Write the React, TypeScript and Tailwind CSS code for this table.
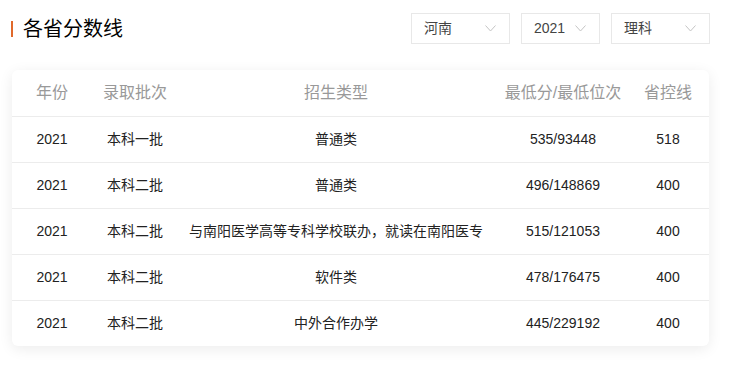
const font = "font-['Liberation_Sans','Noto_Sans_CJK_SC',sans-serif]";

const rows = [
  { year: '2021', batch: '本科一批', type: '普通类', score: '535/93448', line: '518' },
  { year: '2021', batch: '本科二批', type: '普通类', score: '496/148869', line: '400' },
  { year: '2021', batch: '本科二批', type: '与南阳医学高等专科学校联办，就读在南阳医专', score: '515/121053', line: '400' },
  { year: '2021', batch: '本科二批', type: '软件类', score: '478/176475', line: '400' },
  { year: '2021', batch: '本科二批', type: '中外合作办学', score: '445/229192', line: '400' },
];

const Chevron = () => (
  <svg width="11" height="7" viewBox="0 0 11 7" fill="none" className="shrink-0">
    <path d="M0.5 0.5 L5.5 6 L10.5 0.5" stroke="#c4c4c4" strokeWidth="1" />
  </svg>
);

const Select = ({ label, width }: { label: string; width: string }) => (
  <div className={`${width} h-[31px] border border-[#e8e8e8] bg-white flex items-center justify-between pl-[12px] pr-[13px]`}>
    <span className="text-[14px] text-[#444]">{label}</span>
    <Chevron />
  </div>
);

// column template shared by header & body
const cols = 'grid grid-cols-[80px_86px_316px_138px_72px]';

export default function App() {
  return (
    <div className={`w-[746px] h-[377px] bg-white ${font}`}>
      {/* Header */}
      <div className="flex items-center justify-between pl-[11px] pr-[36px] pt-[13px]">
        <div className="flex items-center gap-[10px]">
          <div className="w-[2px] h-[16px] bg-[#e0692b]" />
          <h1 className="text-[20px] leading-[28px] font-normal text-black">各省分数线</h1>
        </div>
        <div className="flex gap-[11px]">
          <Select label="河南" width="w-[99px]" />
          <Select label="2021" width="w-[79px]" />
          <Select label="理科" width="w-[99px]" />
        </div>
      </div>

      {/* Table card */}
      <div className="mt-[26px] ml-[12px] w-[697px] rounded-[6px] bg-white shadow-[0_3px_14px_rgba(0,0,0,0.08)] overflow-hidden">
        <div className={`${cols} h-[46px] items-center text-center text-[16px] text-[#999]`}>
          <div>年份</div>
          <div>录取批次</div>
          <div>招生类型</div>
          <div>最低分/最低位次</div>
          <div>省控线</div>
        </div>
        {rows.map((r, i) => (
          <div
            key={i}
            className={`${cols} h-[46px] items-center text-center text-[14px] text-[#222] border-t border-[#ececec]`}
          >
            <div>{r.year}</div>
            <div>{r.batch}</div>
            <div className="whitespace-nowrap">{r.type}</div>
            <div>{r.score}</div>
            <div>{r.line}</div>
          </div>
        ))}
      </div>
    </div>
  );
}
